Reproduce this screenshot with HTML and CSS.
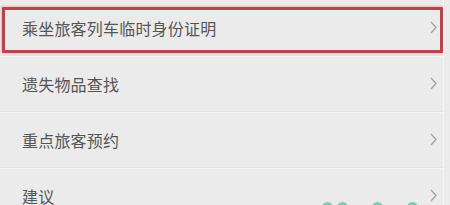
FILE: index.html
```
<!DOCTYPE html>
<html lang="zh">
<head>
    <meta charset="UTF-8">
    <meta name="viewport" content="width=device-width, initial-scale=1.0">
    <title>服务</title>
    <link rel="stylesheet" href="styles.css">
</head>
<body>
    <div class="menu">
        <div class="item">
            <span class="label">乘坐旅客列车临时身份证明</span>
            <svg class="arrow" width="7" height="13" viewBox="0 0 7 13"><polyline points="1,1 6,6.5 1,12" /></svg>
        </div>
        <div class="item">
            <span class="label">遗失物品查找</span>
            <svg class="arrow" width="7" height="13" viewBox="0 0 7 13"><polyline points="1,1 6,6.5 1,12" /></svg>
        </div>
        <div class="item">
            <span class="label">重点旅客预约</span>
            <svg class="arrow" width="7" height="13" viewBox="0 0 7 13"><polyline points="1,1 6,6.5 1,12" /></svg>
        </div>
        <div class="item">
            <span class="label">建议</span>
            <svg class="arrow" width="7" height="13" viewBox="0 0 7 13"><polyline points="1,1 6,6.5 1,12" /></svg>
        </div>

        <div class="mark"></div>
        <div class="stamp">
            <i></i><i></i><i class="wide"></i><i class="wide"></i>
        </div>
    </div>
</body>
</html>
```

FILE: styles.css
```
html,
body {
    margin: 0;
    padding: 0;
    background: #ebebeb;
    font-family: "Noto Sans CJK SC", "Noto Sans", sans-serif;
}

.menu {
    position: relative;
    width: 443px;
    height: 205px;
    overflow: hidden;
    border-right: 1px solid #f4f4f4;
}

.item {
    display: flex;
    align-items: center;
    justify-content: space-between;
    height: 55px;
    padding: 0 6px 0 22px;
    border-bottom: 1px solid #e2e2e2;
    box-shadow: 0 1px 0 #f3f3f3;
}

.label {
    font-size: 16px;
    color: #555;
    letter-spacing: 0.2px;
}

.arrow polyline {
    fill: none;
    stroke: #a3a3a3;
    stroke-width: 1.3;
}

/* red highlight drawn over the first row */
.mark {
    position: absolute;
    left: 2px;
    top: 7px;
    width: 435px;
    height: 40px;
    border: 3px solid #b3474b;
    border-radius: 1px;
    box-shadow: 0 0 2px 1px #f2b9b9;
}

.stamp {
    position: absolute;
    left: 322px;
    top: 202px;
    display: flex;
    gap: 4px;
}

.stamp i {
    display: block;
    width: 11px;
    height: 11px;
    border-radius: 50%;
    background: #7ec9b9;
}

.stamp .wide {
    margin-left: 20px;
}
```
